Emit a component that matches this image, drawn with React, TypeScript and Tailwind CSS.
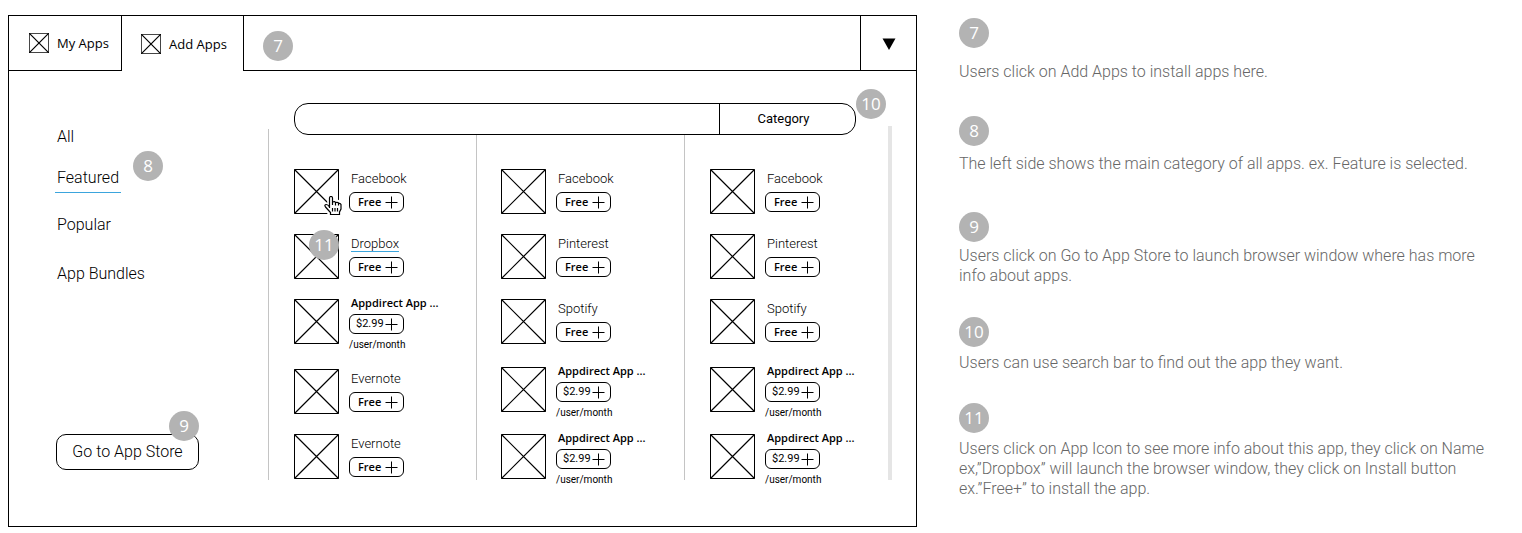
import React from "react";

type App = { name: string; paid?: boolean; badge?: string; cursor?: boolean; linked?: boolean };

const bundle: App = { name: "Appdirect App ...", paid: true };

const firstColumn: App[] = [
  { name: "Facebook", cursor: true },
  { name: "Dropbox", badge: "11", linked: true },
  bundle,
  { name: "Evernote" },
  { name: "Evernote" },
];
const secondColumn: App[] = [{ name: "Facebook" }, { name: "Pinterest" }, { name: "Spotify" }, bundle, bundle];

const notes = [
  { id: "7", text: "Users click on Add Apps to install apps here.", style: "gap-3.5 h-[98px]" },
  { id: "8", text: "The left side shows the main category of all apps. ex. Feature is selected.", style: "gap-2 h-24" },
  { id: "9", text: "Users click on Go to App Store to launch browser window where has more info about apps.", style: "gap-1 h-[105px]" },
  { id: "10", text: "Users can use search bar to find out the app they want.", style: "gap-1.5 h-[86px]" },
  {
    id: "11",
    text: "Users click on App Icon to see more info about this app, they click on Name ex,”Dropbox” will launch the browser window, they click on Install button ex.”Free+” to install the app.",
    style: "gap-1.5",
  },
];

function Badge({ children, className = "" }: { children: React.ReactNode; className?: string }) {
  return (
    <span
      className={`flex size-[30px] shrink-0 items-center justify-center rounded-full bg-[#b3b3b3] pb-0.5 font-['Open_Sans',sans-serif] text-[17px] leading-none font-medium text-white ${className}`}
    >
      {children}
    </span>
  );
}

function Placeholder({ className }: { className: string }) {
  return (
    <svg viewBox="0 0 45 45" className={`block shrink-0 ${className}`} fill="none" stroke="black" aria-hidden="true">
      <rect x="0.5" y="0.5" width="44" height="44" vectorEffect="non-scaling-stroke" />
      <path d="M0.5 0.5 44.5 44.5M44.5 0.5 0.5 44.5" strokeWidth="1.2" vectorEffect="non-scaling-stroke" />
    </svg>
  );
}

function HandCursor() {
  return (
    <svg viewBox="0 0 18 19" className="absolute top-[27px] left-[30px] h-[19px] w-[18px]" aria-hidden="true">
      <path d="M4 0H9.500V4.500H14L18 7V14L16 19H5.500L0 12V7.500H4z" fill="white" stroke="white" strokeWidth="1.5" />
      <path
        d="M5.500 12V2q0-1.500 1.500-1.500T8.500 2V9M8.500 6q2.500-1 3 .5v3M11.500 6.500q2.500-.5 3 .5v2.500M14.500 7.500q2-.5 2.500 1V13l-1.500 3v2.500h-9V16.500L1.500 11q-1.500-2 .5-2.500 2-.2 3.500 2.500M8.500 12v3.500M11 12v3.500M13.500 12v3.500"
        fill="none"
        stroke="black"
        strokeWidth="1.2"
      />
    </svg>
  );
}

function AppItem({ app }: { app: App }) {
  return (
    <li className="flex items-start gap-2.5">
      <div className="relative shrink-0">
        <Placeholder className="size-[45px]" />
        {app.cursor && <HandCursor />}
        {app.badge && <Badge className="absolute -top-1 left-[15px]">{app.badge}</Badge>}
      </div>
      <div className={`flex flex-col items-start gap-[3px] ${app.paid ? "-mt-1" : ""}`}>
        <a
          href="#app"
          className={
            app.paid
              ? "pl-0.5 font-['Open_Sans',sans-serif] text-[11px] leading-4 font-semibold whitespace-nowrap"
              : app.linked
                ? "pl-0.5 text-[13px] leading-5 underline decoration-[#3ba5dd] decoration-1 underline-offset-3 [text-decoration-skip-ink:none]"
                : "pl-0.5 text-[13px] leading-5"
          }
        >
          {app.name}
        </a>
        <button className="flex h-5 w-[55px] items-center justify-between rounded-[6px] border border-black pr-[5px] pl-2 text-[11px]">
          {app.paid ? (
            <span className="-ml-0.5 font-normal">$2.99</span>
          ) : (
            <span className="font-['Open_Sans',sans-serif] font-semibold">Free</span>
          )}
          <svg viewBox="0 0 13 13" className="size-[13px]" stroke="black" aria-hidden="true">
            <path d="M6.500 0.500V12.500M0.500 6.500H12.500" />
          </svg>
        </button>
        {app.paid && <span className="text-[10px] leading-4 font-normal">/user/month</span>}
      </div>
    </li>
  );
}

export default function App() {
  return (
    <div className="grid grid-cols-[909fr_605fr] items-start bg-white pt-[15px] pl-2 font-[Roboto,sans-serif] font-light text-black">
      <main className="border border-black pb-[46px]">
        <header className="flex h-[55px]">
          <button className="flex w-[113px] items-center gap-2 border-r border-b border-black pl-5 font-['Open_Sans',sans-serif] text-[13px] font-medium">
            <Placeholder className="size-5" />
            <span className="pt-0.5">My Apps</span>
          </button>
          <button className="flex w-[122px] items-center gap-2 border-r border-black pl-[19px] font-['Open_Sans',sans-serif] text-[13px] font-medium">
            <Placeholder className="size-5" />
            <span className="pt-0.5">Add Apps</span>
          </button>
          <div className="flex flex-1 items-center border-b border-black pt-1.5 pl-[19px]">
            <Badge>7</Badge>
          </div>
          <button aria-label="More" className="flex w-14 items-center justify-center border-b border-l border-black pt-0.5">
            <svg viewBox="0 0 14 12" className="h-3 w-3.5" aria-hidden="true">
              <path d="M0.500 0.500H13.500L7 12z" />
            </svg>
          </button>
        </header>

        <div className="flex pt-8">
          <nav className="mt-[26px] flex h-[351px] w-[260px] shrink-0 flex-col items-start border-r border-[#c4c4c4] pl-[47px] text-base leading-5">
            <a href="#all" className="-mt-0.5 pl-px">
              All
            </a>
            <div className="mt-1 flex h-[54px] items-end gap-3 pb-3">
              <a href="#featured" className="-ml-px border-b border-[#3ba5dd] px-0.5 pb-1">
                Featured
              </a>
              <Badge className="mb-3">8</Badge>
            </div>
            <a href="#popular" className="mt-2.5 pl-px">
              Popular
            </a>
            <a href="#bundles" className="mt-[29px] pl-px">
              App Bundles
            </a>
            <div className="relative mt-auto mb-2.5">
              <button className="h-9 w-[143px] rounded-[10px] border border-black">Go to App Store</button>
              <Badge className="absolute -top-[23px] right-0">9</Badge>
            </div>
          </nav>

          <div className="flex flex-1 flex-col pl-[25px]">
            <form className="relative mr-8 flex h-8 rounded-[14px] border border-black">
              <input aria-label="Search apps" className="min-w-0 flex-1 rounded-l-[14px] outline-none" />
              <button type="button" className="w-[136px] border-l border-black pr-2 text-[13px] font-normal">
                Category
              </button>
              <Badge className="absolute -top-[15px] -right-[31px]">10</Badge>
            </form>
            <div className="grid h-[345px] grid-cols-[183px_208px_1fr]">
              <ul className="grid grid-rows-[65px_65px_70px_65px_45px] border-r border-[#c4c4c4] pt-[34px]">
                {firstColumn.map((app, i) => (
                  <AppItem key={i} app={app} />
                ))}
              </ul>
              <ul className="grid grid-rows-[65px_65px_68px_67px_45px] border-r border-[#c4c4c4] pt-[34px] pl-6">
                {secondColumn.map((app, i) => (
                  <AppItem key={i} app={app} />
                ))}
              </ul>
              <ul className="grid grid-rows-[65px_65px_68px_67px_45px] pt-[34px] pl-[25px]">
                {secondColumn.map((app, i) => (
                  <AppItem key={i} app={app} />
                ))}
              </ul>
            </div>
          </div>
          <div className="mt-[23px] mr-6 w-1 shrink-0 bg-[#e5e5e5]" />
        </div>
      </main>

      <aside className="flex flex-col pt-[3px] pr-7 pl-[42px] text-base leading-5 text-[#666]">
        {notes.map((note) => (
          <section key={note.id} className={`flex flex-col ${note.style}`}>
            <Badge>{note.id}</Badge>
            <p>{note.text}</p>
          </section>
        ))}
      </aside>
    </div>
  );
}
